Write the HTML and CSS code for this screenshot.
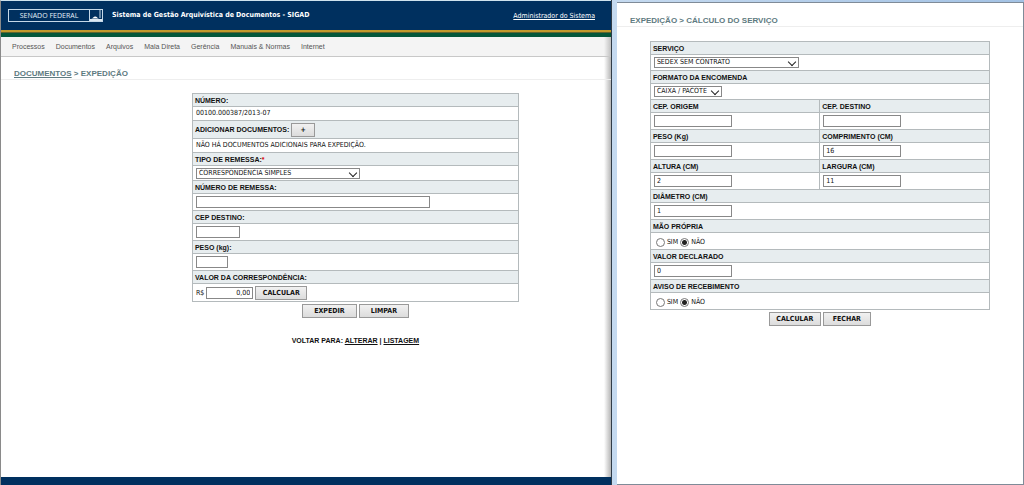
FILE: index.html
```html
<!DOCTYPE html>
<html lang="pt-BR">
<head>
<meta charset="utf-8">
<title>Sistema de Gestão Arquivística de Documentos - SIGAD</title>
<link rel="stylesheet" href="styles.css">
</head>
<body>
<div class="desktop">
  <div class="main-window">
    <header class="topbar">
      <div class="logo">
        <span class="logo-text">SENADO FEDERAL</span>
        <svg class="logo-mark" viewBox="0 0 13 11" aria-hidden="true"><path d="M0 0h1v11H0z" fill="#c5d8e8"/><path d="M10.500 0h1v8h-1z" fill="#c5d8e8"/><path d="M1 9h12v2H1z" fill="#dce8f2"/><path d="M2 8.500c2 0 2.500-2 4.200-2s2.300 2 4.200 2z" fill="#fff"/></svg>
      </div>
      <h1 class="app-title">Sistema de Gestão Arquivística de Documentos - SIGAD</h1>
      <a class="user-link" href="#">Administrador do Sistema</a>
    </header>
    <nav class="menu">
      <a href="#">Processos</a>
      <a href="#">Documentos</a>
      <a href="#">Arquivos</a>
      <a href="#">Mala Direta</a>
      <a href="#">Gerência</a>
      <a href="#">Manuais &amp; Normas</a>
      <a href="#">Internet</a>
    </nav>
    <h2 class="crumbs"><a href="#">DOCUMENTOS</a> &gt; EXPEDIÇÃO</h2>
    <form class="shipping">
      <table class="fields">
        <tr><th>NÚMERO:</th></tr>
        <tr class="text-row"><td>00100.000387/2013-07</td></tr>
        <tr class="action-row"><th>ADICIONAR DOCUMENTOS: <button class="btn add" type="button" aria-label="Adicionar documentos">+</button></th></tr>
        <tr class="text-row"><td>NÃO HÁ DOCUMENTOS ADICIONAIS PARA EXPEDIÇÃO.</td></tr>
        <tr><th><label for="tipo">TIPO DE REMESSA:<span class="required">*</span></label></th></tr>
        <tr class="select-row"><td><span class="pick wide"><select id="tipo"><option>CORRESPONDÊNCIA SIMPLES</option></select></span></td></tr>
        <tr><th><label for="remessa">NÚMERO DE REMESSA:</label></th></tr>
        <tr class="input-row tall"><td><input class="box long" id="remessa" type="text"></td></tr>
        <tr><th><label for="cep">CEP DESTINO:</label></th></tr>
        <tr class="input-row tall"><td><input class="box small" id="cep" type="text"></td></tr>
        <tr><th><label for="peso">PESO (kg):</label></th></tr>
        <tr class="input-row tall"><td><input class="box tiny" id="peso" type="text"></td></tr>
        <tr><th><label for="valor">VALOR DA CORRESPONDÊNCIA:</label></th></tr>
        <tr class="action-row"><td>R$ <input class="box money" id="valor" type="text" value="0,00"> <button class="btn calc" type="button">CALCULAR</button></td></tr>
      </table>
      <div class="actions">
        <button class="btn submit" type="button">EXPEDIR</button>
        <button class="btn clear" type="reset">LIMPAR</button>
      </div>
      <p class="back">VOLTAR PARA: <a href="#">ALTERAR</a> | <a href="#">LISTAGEM</a></p>
    </form>
    <footer class="bottombar"></footer>
  </div>
  <div class="popup">
    <div class="popup-page">
      <h2 class="crumbs popup-crumbs">EXPEDIÇÃO &gt; CÁLCULO DO SERVIÇO</h2>
      <form class="service">
        <table class="fields split">
          <tr><th colspan="2"><label for="servico">SERVIÇO</label></th></tr>
          <tr class="input-row"><td colspan="2"><span class="pick service-pick"><select id="servico"><option>SEDEX SEM CONTRATO</option></select></span></td></tr>
          <tr><th colspan="2"><label for="formato">FORMATO DA ENCOMENDA</label></th></tr>
          <tr class="input-row"><td colspan="2"><span class="pick format-pick"><select id="formato"><option>CAIXA / PACOTE</option></select></span></td></tr>
          <tr><th><label for="origem">CEP. ORIGEM</label></th><th><label for="destino">CEP. DESTINO</label></th></tr>
          <tr class="input-row tall"><td><input class="box" id="origem" type="text"></td><td><input class="box" id="destino" type="text"></td></tr>
          <tr><th><label for="peso-kg">PESO (Kg)</label></th><th><label for="comprimento">COMPRIMENTO (CM)</label></th></tr>
          <tr class="input-row tall"><td><input class="box" id="peso-kg" type="text"></td><td><input class="box" id="comprimento" type="text" value="16"></td></tr>
          <tr><th><label for="altura">ALTURA (CM)</label></th><th><label for="largura">LARGURA (CM)</label></th></tr>
          <tr class="input-row tall"><td><input class="box" id="altura" type="text" value="2"></td><td><input class="box" id="largura" type="text" value="11"></td></tr>
          <tr><th colspan="2"><label for="diametro">DIÂMETRO (CM)</label></th></tr>
          <tr class="input-row tall"><td colspan="2"><input class="box" id="diametro" type="text" value="1"></td></tr>
          <tr><th colspan="2">MÃO PRÓPRIA</th></tr>
          <tr class="radio-row"><td colspan="2"><div class="radios"><label><input type="radio" name="mao">SIM</label><label><input type="radio" name="mao" checked>NÃO</label></div></td></tr>
          <tr><th colspan="2"><label for="declarado">VALOR DECLARADO</label></th></tr>
          <tr class="input-row tall"><td colspan="2"><input class="box" id="declarado" type="text" value="0"></td></tr>
          <tr><th colspan="2">AVISO DE RECEBIMENTO</th></tr>
          <tr class="radio-row"><td colspan="2"><div class="radios"><label><input type="radio" name="aviso">SIM</label><label><input type="radio" name="aviso" checked>NÃO</label></div></td></tr>
        </table>
        <div class="actions">
          <button class="btn calc" type="button">CALCULAR</button>
          <button class="btn close" type="button">FECHAR</button>
        </div>
      </form>
    </div>
  </div>
</div>
</body>
</html>
```

FILE: styles.css
```css
* {
  box-sizing: border-box;
}

body {
  margin: 0;
  color: #111;
  background: #fff;
  font: 7px/9px "DejaVu Sans Condensed", "DejaVu Sans", sans-serif;
}

.desktop {
  display: grid;
  grid-template-columns: minmax(0, 611fr) minmax(0, 413fr);
  min-height: 100vh;
}

/* Main application window */
.main-window {
  display: flex;
  flex-direction: column;
  border-top: 1px solid #cfe3ee;
  border-left: 1px solid #8a8a8a;
  background: linear-gradient(to left, #b5b5b5, #fff 7px);
}

.topbar {
  display: flex;
  align-items: center;
  height: 36px;
  padding: 0 16px 7px 7px;
  color: #fff;
  background: linear-gradient(#00305f 29px, #c29a2c 29px, #c29a2c 31px, #5f652f 31px, #5f652f 32px, #04573a 32px);
}

.logo {
  display: flex;
  align-items: center;
  justify-content: space-between;
  width: 95px;
  height: 13px;
  border: 1px solid #c5d8e8;
}

.logo-text {
  flex: 1;
  text-align: center;
  color: #e6f0f8;
  font: 7px/9px "Open Sans", sans-serif;
}

.logo-mark {
  width: 13px;
  height: 11px;
}

.app-title {
  margin: 0 auto 0 9px;
  font: bold 7px/9px "DejaVu Sans Condensed", "DejaVu Sans", sans-serif;
}

.user-link {
  padding-top: 2px;
  color: #fff;
}

.menu {
  display: flex;
  align-items: center;
  gap: 11px;
  height: 20px;
  padding-left: 11px;
  border-bottom: 1px solid #c8c8c8;
  background: linear-gradient(to left, #c0c0c0, #f4f4f4 7px);
}

.menu a {
  color: #555;
  font: 7px/9px "Liberation Sans", sans-serif;
  text-decoration: none;
}

.crumbs {
  margin: 11px 0 13px;
  padding-left: 13px;
  border-bottom: 1px solid #eee;
  color: #5d7a80;
  font: bold 8px/11px "Liberation Sans", sans-serif;
}

.crumbs a {
  color: inherit;
}

.shipping {
  width: 53.6%;
  margin-left: 31.3%;
}

.bottombar {
  height: 8px;
  margin-top: auto;
  background: #00305f;
}

/* Field tables */
.fields {
  width: 100%;
  border-collapse: collapse;
}

.split {
  table-layout: fixed;
}

.fields th,
.fields td {
  height: 13px;
  padding: 0 3px;
  border: 1px solid #b4babc;
  text-align: left;
  vertical-align: middle;
}

.fields th {
  padding: 0 2px;
  background: #e7edef;
  font: bold 7px/9px "Liberation Sans", sans-serif;
}

.fields .text-row td {
  height: 14px;
}

.fields .select-row td {
  height: 15px;
}

.fields .input-row td {
  height: 16px;
}

.fields .input-row.tall td,
.fields .radio-row td {
  height: 17px;
}

.fields .action-row th,
.fields .action-row td {
  height: 18px;
}

.required {
  color: #d00;
}

.box {
  display: inline-block;
  width: 78px;
  height: 12px;
  padding: 0 2px;
  border: 1px solid #888;
  border-radius: 0;
  background: #fff;
  color: inherit;
  font: inherit;
  vertical-align: middle;
}

.box.long {
  width: 234px;
}

.box.small {
  width: 44px;
}

.box.tiny {
  width: 32px;
}

.box.money {
  width: 47px;
  text-align: right;
}

.pick {
  display: block;
  position: relative;
  height: 11px;
}

.pick select {
  display: block;
  width: 100%;
  height: 100%;
  padding: 0 2px;
  border: 1px solid #888;
  border-radius: 0;
  appearance: none;
  background: #fff;
  color: inherit;
  font: inherit;
}

.pick::after {
  content: "";
  position: absolute;
  top: 2px;
  right: 4px;
  width: 5px;
  height: 5px;
  border: solid #222;
  border-width: 0 1px 1px 0;
  transform: rotate(45deg);
  pointer-events: none;
}

.pick.wide {
  width: 164px;
}

.pick.service-pick {
  width: 145px;
}

.pick.format-pick {
  width: 68px;
}

.btn {
  height: 14px;
  padding: 1px 0 0;
  border: 1px solid #999;
  border-radius: 0;
  background: linear-gradient(#f1f1f1, #dcdcdc);
  color: #111;
  font: bold 7px/9px "DejaVu Sans Condensed", "DejaVu Sans", sans-serif;
  vertical-align: middle;
}

.btn.add {
  width: 24px;
}

.btn.calc {
  width: 52px;
}

.btn.submit {
  width: 55px;
}

.btn.clear {
  width: 50px;
}

.btn.close {
  width: 48px;
}

.actions {
  display: flex;
  justify-content: center;
  gap: 2px;
  margin-top: 2px;
}

.back {
  margin: 18px 0 0;
  text-align: center;
  font: bold 7px/9px "Liberation Sans", sans-serif;
}

.back a {
  color: inherit;
}

.radios {
  display: flex;
  gap: 2px;
  padding: 2px 0 0 2px;
}

.radios label {
  display: flex;
  align-items: center;
  gap: 2px;
}

.radios input {
  width: 9px;
  height: 9px;
  margin: 0;
  border: 1px solid #777;
  border-radius: 50%;
  appearance: none;
  background: #fff;
}

.radios input:checked {
  background: radial-gradient(circle, #222 2px, #fff 3px);
}

/* Popup window */
.popup {
  display: flex;
  padding: 2px 0 0 5px;
  border-left: 1px solid #303c48;
  background: linear-gradient(to right, #c5daf0, #a3c2e4);
}

.popup-page {
  flex: 1;
  border: solid #7f8b98;
  border-width: 1px 1px 1px 0;
  background: #fff;
}

.popup-crumbs {
  margin: 12px 0 14px;
}

.service {
  width: 83.7%;
  margin-left: 8.1%;
}
```
